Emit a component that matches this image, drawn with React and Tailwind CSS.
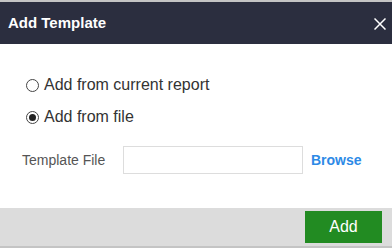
export default function App() {
  return (
    <div className="w-[392px] h-[248px] flex flex-col bg-white" style={{ fontFamily: '"Liberation Sans", Arial, sans-serif' }}>
      <div className="h-[2px] bg-[#c4c4c4]" />
      <div className="h-[42px] bg-[#2b2e3f] flex items-center justify-between pl-[8px] pr-[6px]">
        <span className="text-white font-bold text-[15px]">Add Template</span>
        <svg width="12" height="12" viewBox="0 0 12 12" className="mt-[1px]">
          <path d="M0.5 0.5 L11.5 11.5 M11.5 0.5 L0.5 11.5" stroke="#ffffff" strokeWidth="1.5" />
        </svg>
      </div>
      <div className="flex-1 flex flex-col pt-[33px]">
        <label className="flex items-center pl-[26px] h-[16px] text-[16px] text-[#333]">
          <span className="w-[13px] h-[13px] rounded-full border border-[#444] bg-white mr-[5px]" />
          <span>Add from current report</span>
        </label>
        <label className="flex items-center pl-[26px] h-[16px] mt-[16px] text-[16px] text-[#333]">
          <span className="w-[13px] h-[13px] rounded-full border border-[#444] bg-white mr-[5px] flex items-center justify-center">
            <span className="w-[7px] h-[7px] rounded-full bg-[#222]" />
          </span>
          <span>Add from file</span>
        </label>
        <div className="flex items-center mt-[21px]">
          <span className="pl-[22px] w-[123px] text-[14px] text-[#555]">Template File</span>
          <div className="w-[180px] h-[28px] border border-[#dddddd] bg-white" />
          <span className="ml-[8px] text-[14px] font-bold text-[#2d8ae6]">Browse</span>
        </div>
      </div>
      <div className="h-[38px] bg-[#dcdcdc] flex items-center justify-end pr-[10px]">
        <button className="w-[77px] h-[32px] bg-[#228b22] text-white text-[16px]">Add</button>
      </div>
      <div className="h-[2px] bg-[#c4c4c4]" />
    </div>
  );
}
